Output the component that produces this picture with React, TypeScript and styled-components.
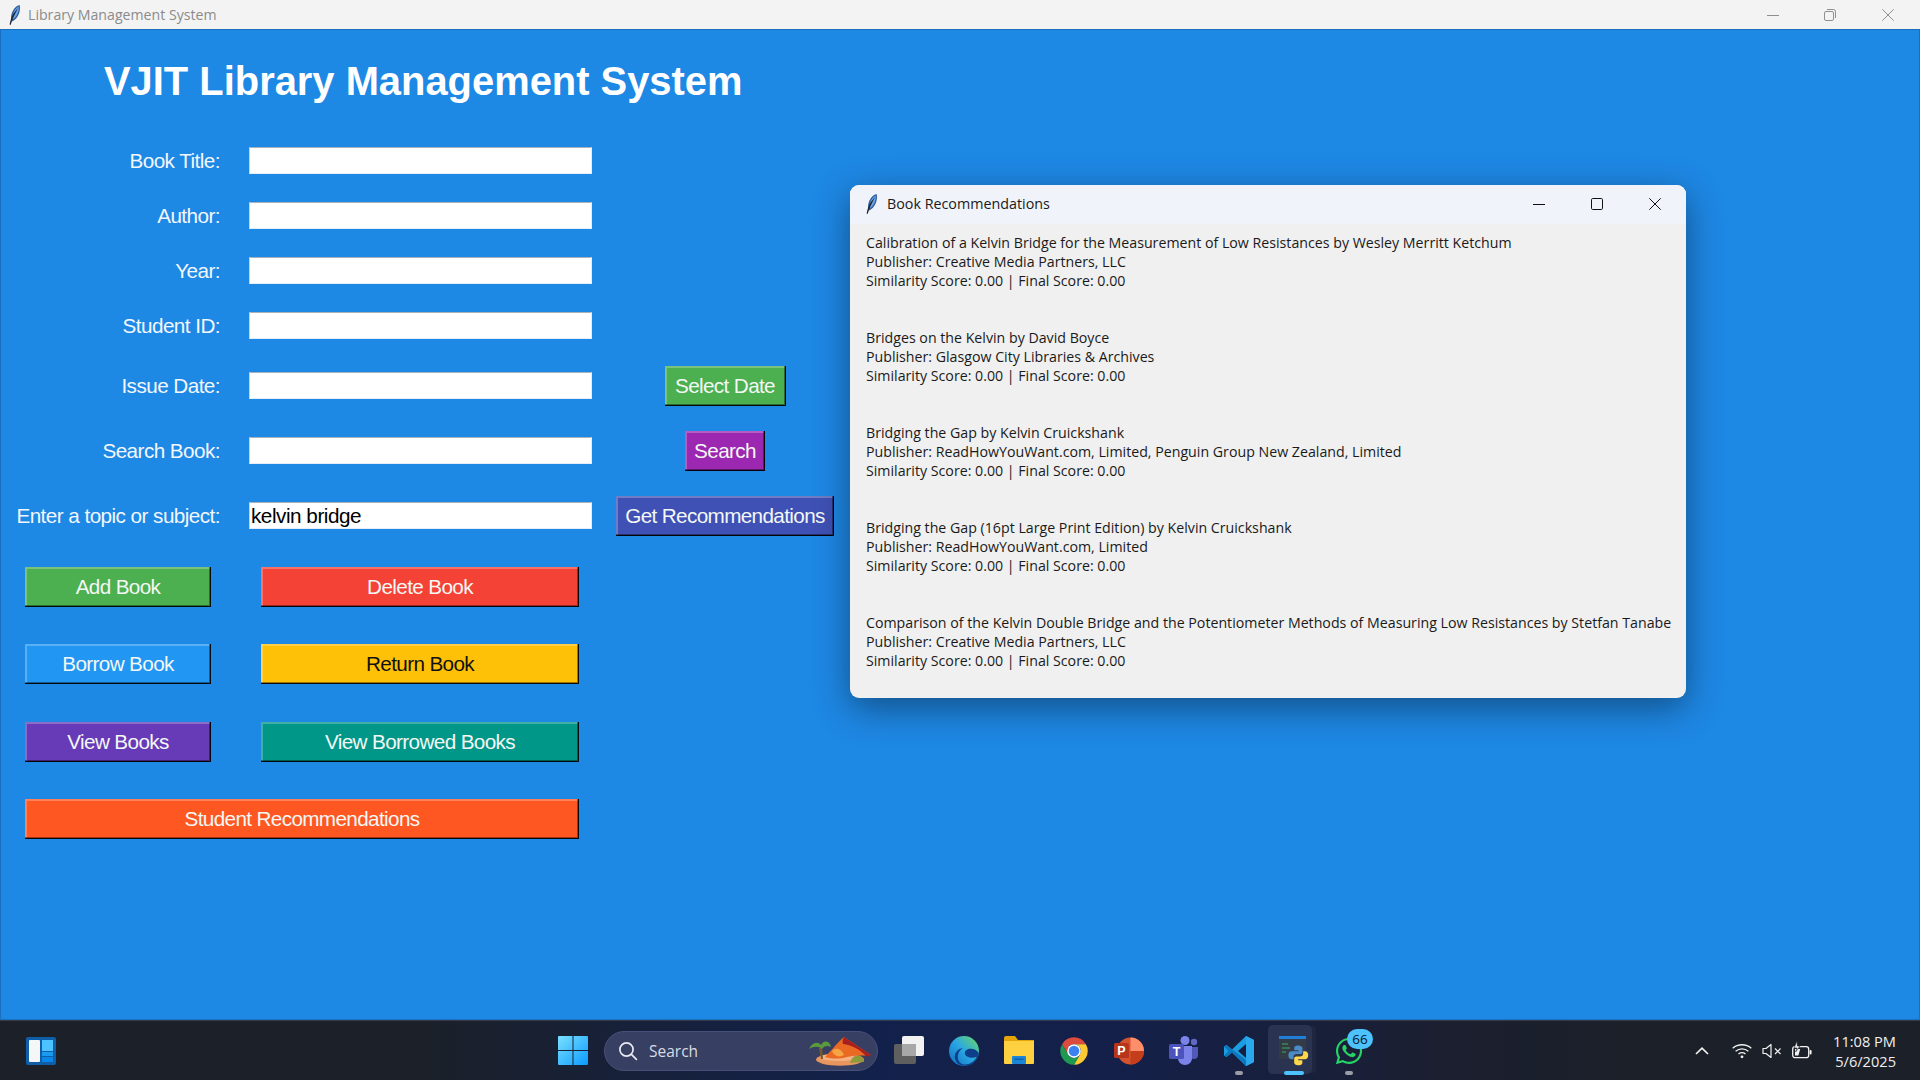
import React from 'react';
import styled, { createGlobalStyle } from 'styled-components';
import { FaWhatsapp } from 'react-icons/fa';

const Global = createGlobalStyle`
  html, body { margin: 0; padding: 0; overflow: hidden; background: #1e88e5; }
  * { box-sizing: border-box; }
`;

const Screen = styled.div`
  position: relative;
  width: 1920px;
  height: 1080px;
  display: flex;
  flex-direction: column;
  overflow: hidden;
  font-family: "Liberation Sans", Arial, sans-serif;
`;

const TitleBar = styled.div`
  height: 29px;
  flex: none;
  display: flex;
  align-items: center;
  background: #f3f3f3;
  color: #8b8b8b;
  font: 14.15px "Open Sans", sans-serif;
  padding-left: 5px;
`;
const TitleText = styled.span`
  margin-left: 3px;
  margin-top: -1px;
`;
const Controls = styled.div`
  margin-left: auto;
  display: flex;
  align-items: center;
  gap: ${(p: { $gap: number }) => p.$gap}px;
`;
const Glyph = styled.svg`
  display: block;
  flex: none;
`;
const MainControls = styled(Controls)`
  padding-right: 26px;
  & > svg:nth-child(2) { margin-left: -1px; }
`;

const Main = styled.main`
  flex: 1;
  background: #1e88e5;
  border: 1px solid #1b6fbf;
  min-height: 0;
`;
const Heading = styled.h1`
  margin: 0;
  height: 103px;
  padding: 31px 0 0 103px;
  color: #fff;
  font: bold 39.9px/40px "Liberation Sans", Arial, sans-serif;
`;
const FormRow = styled.div<{ $h: number }>`
  height: ${(p) => p.$h}px;
  display: grid;
  grid-template-columns: 219px 343px 248px;
  align-items: center;
`;
const Label = styled.label`
  text-align: right;
  color: #f2f7fd;
  font-size: 20.7px;
  letter-spacing: -0.55px;
  white-space: nowrap;
`;
const Field = styled.input`
  width: 343px;
  height: 27px;
  margin-left: 29px;
  padding: 0 1px;
  background: #fff;
  border: 1px solid #e4eefb;
  border-top-color: #a9b2bb;
  border-left-color: #c8d2dc;
  color: #000;
  font: 20.7px "Liberation Sans", Arial, sans-serif;
  letter-spacing: -0.47px;
  outline: none;
`;
const ActionCell = styled.div`
  margin-left: 29px;
  padding-left: 18px;
  width: 248px;
  display: flex;
  justify-content: center;
`;
const Button = styled.button<{ $bg: string; $fg?: string; $w?: number; $span?: boolean }>`
  height: 40px;
  width: ${(p) => (p.$w ? `${p.$w}px` : '100%')};
  flex: none;
  ${(p) => (p.$span ? 'grid-column: 1 / span 2;' : '')}
  background: ${(p) => p.$bg};
  color: ${(p) => p.$fg || '#f4f8f4'};
  border: 0;
  padding: 0;
  font: 20.7px "Liberation Sans", Arial, sans-serif;
  letter-spacing: -0.63px;
  box-shadow:
    inset -1px -1px 0 rgba(0, 0, 0, 0.9),
    inset -2px -2px 0 rgba(0, 0, 0, 0.4),
    inset 2px 2px 0 rgba(255, 255, 255, 0.25);
`;
const ActionGrid = styled.div`
  margin: 19px 0 0 24px;
  width: 554px;
  display: grid;
  grid-template-columns: 186px 318px;
  column-gap: 50px;
  grid-auto-rows: 40px;
  row-gap: 37.33px;
`;

const Dialog = styled.section`
  position: absolute;
  left: 850px;
  top: 185px;
  width: 836px;
  height: 513px;
  border-radius: 9px;
  overflow: hidden;
  background: #f0f0f0;
  box-shadow: 0 10px 36px rgba(0, 0, 0, 0.42);
`;
const DialogHeader = styled.header`
  height: 39px;
  background: #f0f3f9;
  display: flex;
  align-items: center;
  padding: 0 25px 2px 12px;
  color: #1a1a1a;
  font: 14.3px "Open Sans", sans-serif;
`;
const DialogTitle = styled.span`
  margin-left: 5px;
`;
const DialogBody = styled.div`
  padding: 9px 0 0 16px;
  color: #1a1a1a;
  font: 14.2px/19px "Open Sans", sans-serif;
  display: flex;
  flex-direction: column;
  gap: 38px;
  white-space: pre;
`;
const Rec = styled.div`
  display: flex;
  flex-direction: column;
`;

const Taskbar = styled.footer`
  height: 60px;
  flex: none;
  display: flex;
  align-items: center;
  padding-left: 26px;
  background: linear-gradient(90deg, #1b2029 0%, #1b2029 22%, #12214b 45%, #14204a 58%, #1b1f30 75%, #1b2029 85%);
  border-top: 1px solid #353c4b;
`;
const Center = styled.div`
  margin-left: 502px;
  display: flex;
  align-items: center;
`;
const SearchPill = styled.div`
  margin-left: 16px;
  width: 274px;
  height: 40px;
  border-radius: 20px;
  background: #373f62;
  border: 1px solid #48507a;
  display: flex;
  align-items: center;
  padding-left: 13px;
  color: #d8dbe6;
  font: 15.5px "Open Sans", sans-serif;
  gap: 11px;
`;
const Highlight = styled.span`
  margin-left: auto;
  margin-right: 5px;
  display: flex;
`;
const Apps = styled.div`
  margin-left: 16px;
  display: flex;
  align-items: center;
  gap: 25px;
`;
const App = styled.div`
  position: relative;
  width: 30px;
  height: 30px;
`;
const ActiveBox = styled.span`
  position: absolute;
  left: -11px;
  top: -11px;
  width: 44px;
  height: 49px;
  border-radius: 5px;
  background: #2a3350;
  box-shadow: 5px 0 0 -1px #1f2740;
`;
const AppIcon = styled.span`
  position: relative;
  display: block;
`;
const Dot = styled.span<{ $active?: boolean }>`
  position: absolute;
  bottom: -9px;
  left: 50%;
  transform: translateX(-50%);
  width: ${(p) => (p.$active ? 20 : 8)}px;
  height: 4px;
  border-radius: 2px;
  background: ${(p) => (p.$active ? '#4cc2ff' : '#9a9da6')};
`;
const Badge = styled.span`
  position: absolute;
  left: 13px;
  top: -7px;
  width: 26px;
  height: 20px;
  border-radius: 10px;
  background: #4cc2ff;
  color: #0c1424;
  font: 13.5px/20px "Open Sans", sans-serif;
  text-align: center;
`;
const Tray = styled.div`
  margin-left: auto;
  display: flex;
  align-items: center;
  padding-right: 24px;
`;
const TrayIcons = styled.div`
  display: flex;
  align-items: center;
  gap: 10px;
`;
const Chevron = styled(Glyph)`
  margin-right: 23px;
`;
const Clock = styled.div`
  margin-left: 21px;
  text-align: right;
  color: #f0f0f0;
  font: 14.6px/20px "Open Sans", sans-serif;
`;

const Feather = () => (
  <Glyph width="20" height="22" viewBox="0 0 20 22">
    <path d="M14.6 1C10.6 2 7.4 6 6.3 11C5.8 13.4 6 15.6 6.6 17.6C10.6 16 13.6 12 14.6 7.4C15.1 5 15.1 2.8 14.6 1Z" fill="#2f5f9e" />
    <path d="M13.6 2.6C10.8 4.2 8.6 7.4 7.8 11.2C7.5 12.6 7.5 14 7.8 15.2C10.6 13.6 12.8 10.4 13.5 6.8C13.8 5.2 13.8 3.8 13.6 2.6Z" fill="#6aa4e6" />
    <path d="M13 4L8 14L5.6 21L4.6 20.6C5.4 16 6.6 12.6 8.6 9.4Z" fill="#20242c" />
  </Glyph>
);

const WinIcon = () => (
  <Glyph width="30" height="29" viewBox="0 0 30 29">
    <defs>
      <linearGradient id="w" x1="0" y1="0" x2="1" y2="1">
        <stop offset="0" stopColor="#7be0ff" />
        <stop offset="1" stopColor="#0a9bff" />
      </linearGradient>
    </defs>
    <path d="M1 0H14.5V14H0V1Q0 0 1 0ZM15.5 0H29Q30 0 30 1V14H15.5ZM0 15H14.5V29H1Q0 29 0 28ZM15.5 15H30V28Q30 29 29 29H15.5Z" fill="url(#w)" />
  </Glyph>
);

const Widgets = () => (
  <Glyph width="30" height="28" viewBox="0 0 30 28">
    <rect width="30" height="28" rx="2" fill="#0f5fa8" />
    <rect x="3" y="3" width="11" height="22" rx="1" fill="#f4f6f8" />
    <rect x="16" y="3" width="11" height="11" fill="#4cc2ff" />
    <rect x="16" y="15" width="11" height="4" fill="#1a9af0" />
    <rect x="16" y="20" width="11" height="5" fill="#0a86e8" />
  </Glyph>
);

const Magnifier = () => (
  <Glyph width="20" height="20" viewBox="0 0 20 20" fill="none" stroke="#e8eaf0" strokeWidth="1.7" strokeLinecap="round">
    <circle cx="8.5" cy="8.5" r="6.6" />
    <path d="M13.4 13.4L18.4 18.4" />
  </Glyph>
);

const Desert = () => (
  <Glyph width="64" height="30" viewBox="0 0 64 30">
    <ellipse cx="32" cy="23.5" rx="24" ry="6.2" fill="#e8955e" />
    <ellipse cx="31" cy="21.5" rx="19" ry="3.6" fill="#f4b184" />
    <path d="M17 21C23 15 28 8 36 1C42 5 54 13 63 19C54 20 46 19 39 21C32 23 24 23 17 21Z" fill="#ea6a24" />
    <path d="M36 1C42 5 54 13 63 19L59 21C53 14 44 9 35 8C34 5 35 3 36 1Z" fill="#a81f1f" />
    <path d="M24 15C28 11 33 12 36 19C31 22 26 20 24 15Z" fill="#f6a544" />
    <path d="M11 12L13 23H15L14 12Z" fill="#7a5a2c" />
    <path d="M1 13C4 6 10 5 13 9C16 3 22 5 23 11C19 9 16 10 14 13C11 10 6 10 1 13Z" fill="#5b9a3c" />
    <path d="M42 27C44 21 47 19 50 20C53 19 55 22 56 26Z" fill="#8f9a3a" />
  </Glyph>
);

const TaskView = () => (
  <Glyph width="30" height="28" viewBox="0 0 30 28">
    <rect x="0" y="8" width="22" height="20" rx="2" fill="#5f5f5f" />
    <rect x="8" y="0" width="22" height="20" rx="2" fill="#f2f2f2" />
    <rect x="8" y="8" width="14" height="12" fill="#a8a8a8" />
  </Glyph>
);

const Edge = () => (
  <Glyph width="30" height="30" viewBox="0 0 30 30">
    <defs>
      <linearGradient id="e1" x1="0" y1="1" x2="1" y2="0">
        <stop offset="0" stopColor="#0f6cc0" />
        <stop offset=".5" stopColor="#2aa6e4" />
        <stop offset="1" stopColor="#6bdc5e" />
      </linearGradient>
    </defs>
    <circle cx="15" cy="15" r="15" fill="url(#e1)" />
    <path d="M29.8 17C27 12.6 21 11.4 17.4 14C15 15.8 15.4 19 18.2 20.6C21.4 22.4 25 22 27.6 20.8C25.6 26 20 29 14.6 28.4C9.6 27.6 7.4 22 9.6 17C10.6 14.6 12.4 13 14 12C8.4 12.8 5.4 17.2 5.8 21.6C6 24 7.2 26 8.8 27.4C13 30.6 19 30.6 23.4 27.8C27 25.6 29.4 21.4 29.8 17Z" fill="#0d3f8a" />
  </Glyph>
);

const Folder = () => (
  <Glyph width="30" height="28" viewBox="0 0 30 28">
    <path d="M0 2Q0 0 2 0H11L14 4H30V12H0Z" fill="#e3a50a" />
    <path d="M0 5H30V27Q30 28 29 28H1Q0 28 0 27Z" fill="#ffd040" />
    <rect x="8" y="20" width="14" height="8" rx="1" fill="#1a86d8" />
    <rect x="10.5" y="22.5" width="9" height="1.4" fill="#0d5ea5" />
  </Glyph>
);

const Chrome = () => (
  <Glyph width="30" height="30" viewBox="0 0 48 48">
    <path d="M43.05 13A22 22 0 0 0 4.95 13L14.5 29.5A11 11 0 0 1 24 13Z" fill="#dd4b3e" />
    <path d="M43.05 13H24A11 11 0 0 1 33.5 29.5L24 46A22 22 0 0 0 43.05 13Z" fill="#fcc934" />
    <path d="M4.95 13A22 22 0 0 0 24 46L33.5 29.5A11 11 0 0 1 14.5 29.5Z" fill="#1e9a50" />
    <circle cx="24" cy="24" r="11" fill="#fff" />
    <circle cx="24" cy="24" r="8.5" fill="#3b82f0" />
  </Glyph>
);

const PowerPoint = () => (
  <Glyph width="30" height="30" viewBox="0 0 30 30">
    <circle cx="16.5" cy="15" r="13.5" fill="#d35230" />
    <path d="M16.5 1.5A13.5 13.5 0 0 1 30 15H16.5Z" fill="#ff8f6b" />
    <path d="M16.5 15H30A13.5 13.5 0 0 1 16.5 28.5Z" fill="#c43e1c" />
    <rect x="0" y="7" width="15" height="15" rx="1.5" fill="#b7351a" />
    <text x="7.5" y="19" textAnchor="middle" fontFamily="Liberation Sans" fontWeight="bold" fontSize="12.5" fill="#fff">P</text>
  </Glyph>
);

const Teams = () => (
  <Glyph width="30" height="30" viewBox="0 0 30 30">
    <circle cx="25" cy="6" r="3.2" fill="#6168c4" />
    <path d="M20 11H29V19C29 22 27 23 25 23C22 23 20 21 20 19Z" fill="#5059b8" />
    <circle cx="16" cy="4.5" r="4.5" fill="#7b83eb" />
    <path d="M9 10H23V22C23 26 20 29 16 29C12 29 9 26 9 22Z" fill="#7b83eb" />
    <rect x="0" y="8" width="15" height="15" rx="1.5" fill="#4b53bc" />
    <text x="7.5" y="20" textAnchor="middle" fontFamily="Liberation Sans" fontWeight="bold" fontSize="12.5" fill="#fff">T</text>
  </Glyph>
);

const VSCode = () => (
  <Glyph width="30" height="30" viewBox="0 0 30 30">
    <path d="M22 0L30 4V26L22 30L8 16.5L2.5 21L0 19.5V10.5L2.5 9L8 13.5ZM22 8L14 15L22 22Z" fill="#1b9de2" fillRule="evenodd" />
    <path d="M22 0L30 4V26L22 30Z" fill="#2aa8ee" />
    <path d="M0 10.5L2.5 9L22 24V30L8 16.5L2.5 21L0 19.5L4.5 15Z" fill="#0b77be" />
  </Glyph>
);

const PythonApp = () => (
  <Glyph width="30" height="30" viewBox="0 0 30 30">
    <rect x="0" y="0" width="27" height="23" fill="#333b46" />
    <rect x="0" y="0" width="27" height="3" fill="#1f7fd6" />
    <path d="M3 8H9M3 12H11M3 16H7" stroke="#3fae5c" strokeWidth="1.2" />
    <g transform="translate(8.5 8.5) scale(.9)">
      <path d="M12 1C8 1 7.5 2.6 7.5 4V6.5H12.2V7.5H4.5C2.5 7.5 1 9 1 12C1 15 2.4 16.5 4.4 16.5H6.6V13.6C6.6 11.8 8 10.6 9.8 10.6H14.2C15.8 10.6 16.6 9.6 16.6 8V4C16.6 2.4 15 1 12 1Z" fill="#4b8cc8" />
      <path d="M12 23C16 23 16.5 21.4 16.5 20V17.5H11.8V16.5H19.5C21.5 16.5 23 15 23 12C23 9 21.6 7.5 19.6 7.5H17.4V10.4C17.4 12.2 16 13.4 14.2 13.4H9.8C8.2 13.4 7.4 14.4 7.4 16V20C7.4 21.6 9 23 12 23Z" fill="#ffd74a" />
    </g>
  </Glyph>
);

const Wifi = () => (
  <Glyph width="20" height="16" viewBox="0 0 20 16" fill="none" stroke="#f2f2f2" strokeWidth="1.3">
    <path d="M0.7 5.2C6 0.6 14 0.6 19.3 5.2" />
    <path d="M3.6 8.2C7.4 5 12.6 5 16.4 8.2" />
    <path d="M6.5 11C8.6 9.4 11.4 9.4 13.5 11" />
    <circle cx="10" cy="13.8" r="1.4" fill="#f2f2f2" stroke="none" />
  </Glyph>
);

const Mute = () => (
  <Glyph width="20" height="16" viewBox="0 0 20 16" fill="none" stroke="#f2f2f2" strokeWidth="1.2">
    <path d="M1 5.5H4L9 1.5V14.5L4 10.5H1Z" strokeLinejoin="round" />
    <path d="M13 5.5L18.5 11M18.5 5.5L13 11" />
  </Glyph>
);

const Battery = () => (
  <Glyph width="20" height="20" viewBox="0 0 20 20" fill="none">
    <rect x="0.7" y="5.7" width="16" height="11" rx="2.5" stroke="#f2f2f2" strokeWidth="1.3" />
    <rect x="17.6" y="9" width="2" height="4.4" rx="1" fill="#f2f2f2" />
    <path d="M3 14.5V8H8.2L6.4 14.5Z" fill="#f2f2f2" />
    <path d="M5 0L2 7H5L3.6 11L8 5H5.4Z" fill="#f2f2f2" stroke="#1b2029" strokeWidth=".6" />
  </Glyph>
);

const Minimize = ({ c }: { c: string }) => (
  <Glyph width="12" height="12" viewBox="0 0 12 12"><path d="M0 6.5H12" stroke={c} strokeWidth="1" /></Glyph>
);
const Restore = ({ c }: { c: string }) => (
  <Glyph width="12" height="12" viewBox="0 0 12 12" fill="none" stroke={c}>
    <rect x=".5" y="2.5" width="9" height="9" rx="1.5" />
    <path d="M3 .5H9.5Q11.5 .5 11.5 2.5V9" />
  </Glyph>
);
const Maximize = ({ c }: { c: string }) => (
  <Glyph width="12" height="12" viewBox="0 0 12 12" fill="none" stroke={c}>
    <rect x=".5" y=".5" width="11" height="11" rx="1.2" />
  </Glyph>
);
const Close = ({ c }: { c: string }) => (
  <Glyph width="12" height="12" viewBox="0 0 12 12" fill="none" stroke={c}>
    <path d="M.3 .3L11.7 11.7M11.7 .3L.3 11.7" />
  </Glyph>
);

const recs = [
  ['Calibration of a Kelvin Bridge for the Measurement of Low Resistances by Wesley Merritt Ketchum', 'Publisher: Creative Media Partners, LLC'],
  ['Bridges on the Kelvin by David Boyce', 'Publisher: Glasgow City Libraries & Archives'],
  ['Bridging the Gap by Kelvin Cruickshank', 'Publisher: ReadHowYouWant.com, Limited, Penguin Group New Zealand, Limited'],
  ['Bridging the Gap (16pt Large Print Edition) by Kelvin Cruickshank', 'Publisher: ReadHowYouWant.com, Limited'],
  ['Comparison of the Kelvin Double Bridge and the Potentiometer Methods of Measuring Low Resistances by Stetfan Tanabe', 'Publisher: Creative Media Partners, LLC'],
];

const fields: { label: string; h: number; value?: string; action?: React.ReactNode }[] = [
  { label: 'Book Title:', h: 55 },
  { label: 'Author:', h: 55 },
  { label: 'Year:', h: 55 },
  { label: 'Student ID:', h: 55 },
  { label: 'Issue Date:', h: 65, action: <Button $bg="#4caf50" $w={121}>Select Date</Button> },
  { label: 'Search Book:', h: 65, action: <Button $bg="#9c27b0" $w={80}>Search</Button> },
  { label: 'Enter a topic or subject:', h: 65, value: 'kelvin bridge', action: <Button $bg="#3f51b5" $w={218}>Get Recommendations</Button> },
];

export default function AppRoot() {
  return (
    <Screen>
      <Global />
      <TitleBar>
        <Feather />
        <TitleText>Library Management System</TitleText>
        <MainControls $gap={46}>
          <Minimize c="#8f8f8f" />
          <Restore c="#8f8f8f" />
          <Close c="#8f8f8f" />
        </MainControls>
      </TitleBar>
      <Main>
        <Heading>VJIT Library Management System</Heading>
        {fields.map((f) => (
          <FormRow key={f.label} $h={f.h}>
            <Label>{f.label}</Label>
            <Field defaultValue={f.value} />
            {f.action && <ActionCell>{f.action}</ActionCell>}
          </FormRow>
        ))}
        <ActionGrid>
          <Button $bg="#4caf50">Add Book</Button>
          <Button $bg="#f44336">Delete Book</Button>
          <Button $bg="#2196f3">Borrow Book</Button>
          <Button $bg="#ffc107" $fg="#111">Return Book</Button>
          <Button $bg="#673ab7">View Books</Button>
          <Button $bg="#009688">View Borrowed Books</Button>
          <Button $bg="#ff5722" $span>Student Recommendations</Button>
        </ActionGrid>
      </Main>
      <Dialog>
        <DialogHeader>
          <Feather />
          <DialogTitle>Book Recommendations</DialogTitle>
          <Controls $gap={46}>
            <Minimize c="#111" />
            <Maximize c="#111" />
            <Close c="#111" />
          </Controls>
        </DialogHeader>
        <DialogBody>
          {recs.map((r) => (
            <Rec key={r[0]}>
              <span>{r[0]}</span>
              <span>{r[1]}</span>
              <span>Similarity Score: 0.00 | Final Score: 0.00</span>
            </Rec>
          ))}
        </DialogBody>
      </Dialog>
      <Taskbar>
        <Widgets />
        <Center>
          <WinIcon />
          <SearchPill>
            <Magnifier />
            Search
            <Highlight><Desert /></Highlight>
          </SearchPill>
          <Apps>
            <App><TaskView /></App>
            <App><Edge /></App>
            <App><Folder /></App>
            <App><Chrome /></App>
            <App><PowerPoint /></App>
            <App><Teams /></App>
            <App><VSCode /><Dot /></App>
            <App><ActiveBox /><AppIcon><PythonApp /></AppIcon><Dot $active /></App>
            <App>
              <FaWhatsapp size={30} color="#25d366" />
              <Badge>66</Badge>
              <Dot />
            </App>
          </Apps>
        </Center>
        <Tray>
          <Chevron width="14" height="8" viewBox="0 0 14 8" fill="none" stroke="#f2f2f2" strokeWidth="1.7"><path d="M1 7L7 1.2L13 7" /></Chevron>
          <TrayIcons>
            <Wifi />
            <Mute />
            <Battery />
          </TrayIcons>
          <Clock>
            <div>11:08 PM</div>
            <div>5/6/2025</div>
          </Clock>
        </Tray>
      </Taskbar>
    </Screen>
  );
}
